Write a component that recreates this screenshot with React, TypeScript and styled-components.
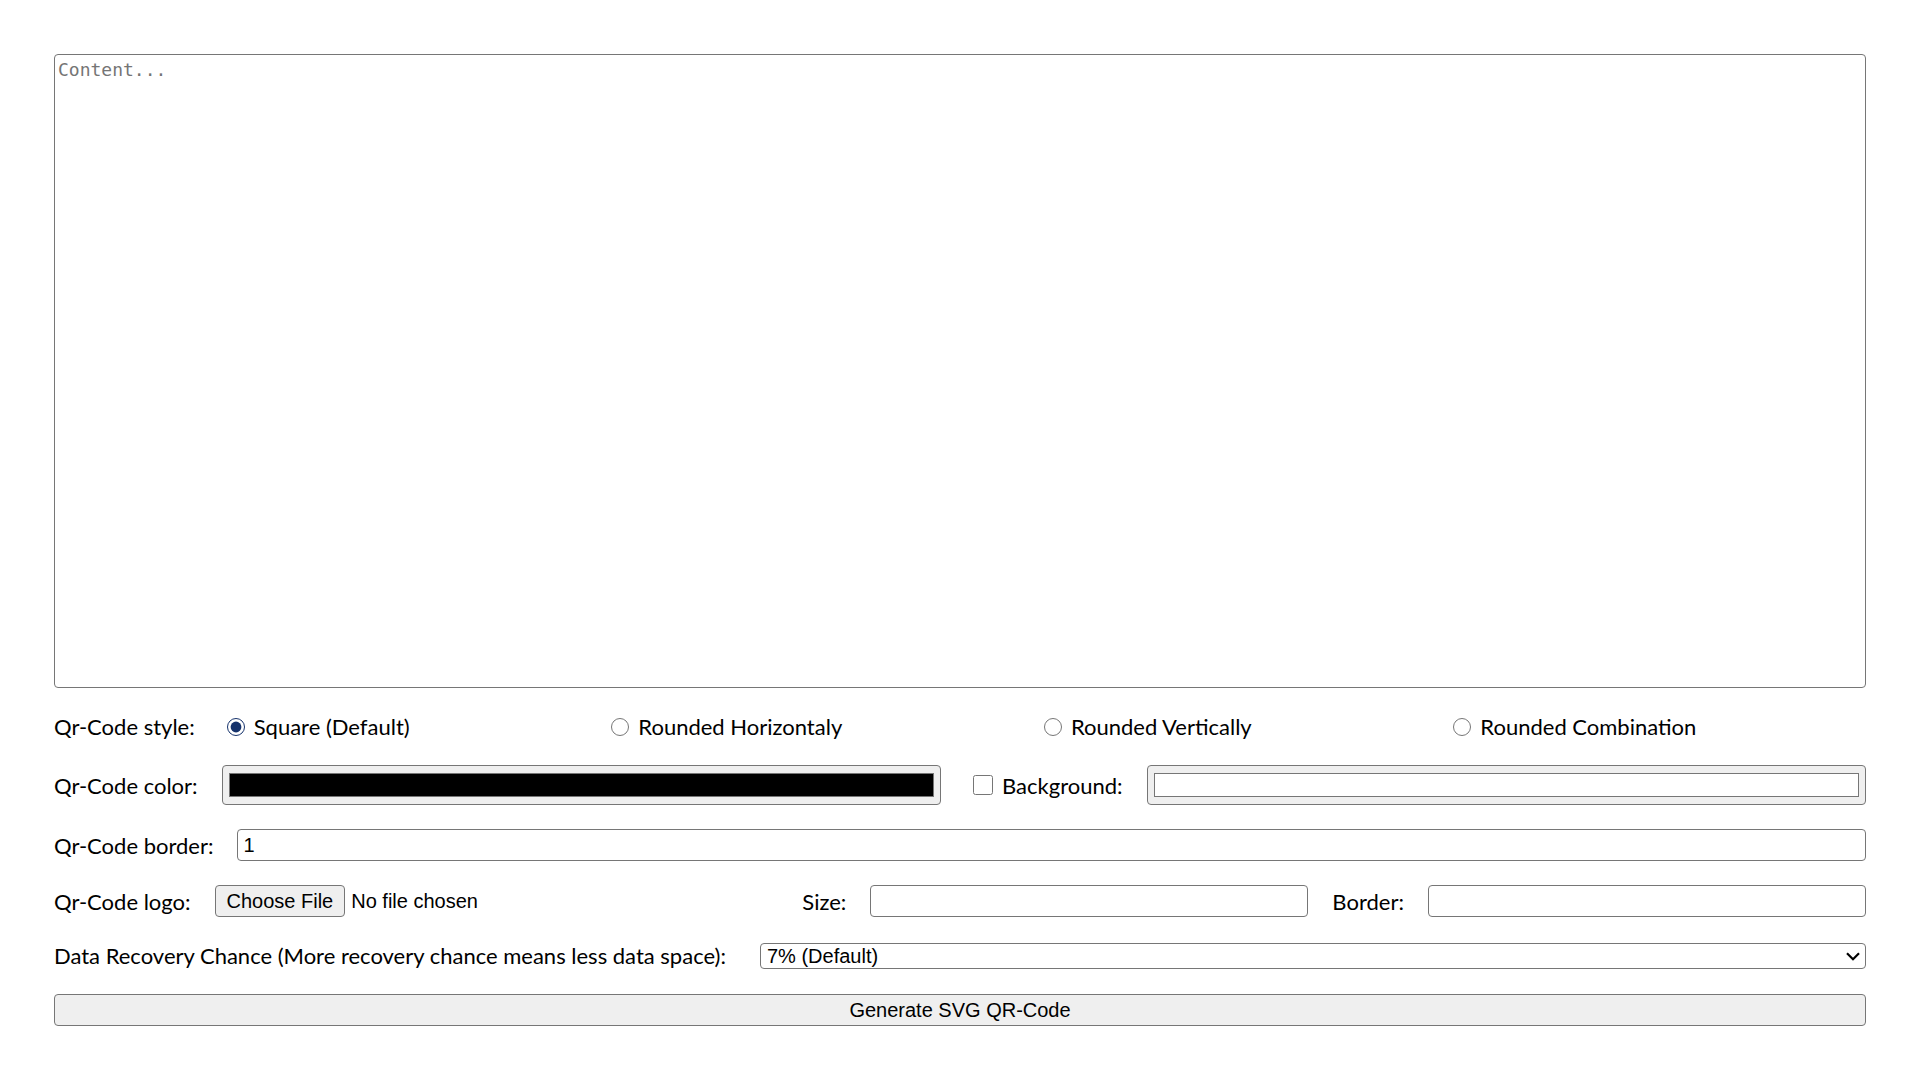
import { useState } from 'react';
import type { FormEvent } from 'react';
import { createGlobalStyle, styled } from 'styled-components';

interface IOption {
  value: string;
  label: string;
}

const GlobalStyle = createGlobalStyle`
  body {
    margin: 0;
    background: #fff;
    color: #000;
    font-family: Lato, sans-serif;
    font-size: 22px;
    line-height: 29px;
  }

  *, *::before, *::after {
    box-sizing: border-box;
  }
`;

const Form = styled.form`
  min-height: 100vh;
  padding: 54px;
  display: flex;
  flex-direction: column;
  gap: 24px;
`;

const Content = styled.textarea`
  flex: 1;
  width: 100%;
  margin: 0;
  padding: 3px;
  border: 1px solid #767676;
  border-radius: 4px;
  resize: none;
  font-family: 'DejaVu Sans Mono', monospace;
  font-size: 18px;
  line-height: 23px;

  &::placeholder {
    color: #757575;
  }
`;

const Row = styled.div`
  display: flex;
  align-items: center;
  gap: 24px;
`;

const Label = styled.label<{ $minWidth?: number }>`
  min-width: ${(props) => props.$minWidth ?? 0}px;
  white-space: nowrap;
`;

const RadioRow = styled(Row).attrs({
  role: 'radiogroup',
  'aria-labelledby': 'style-title',
})``;

const Choice = styled.label<{ $grow?: boolean }>`
  flex: ${(props) => (props.$grow ? '1 1 auto' : 'none')};
  padding-left: 8px;
  display: flex;
  align-items: center;
  gap: 9px;
  white-space: nowrap;
`;

const Radio = styled.input.attrs({ type: 'radio' })`
  width: 18px;
  height: 18px;
  margin: 0;
  accent-color: #15326b;
`;

const Checkbox = styled.input.attrs({ type: 'checkbox' })`
  width: 20px;
  height: 20px;
  margin: 0;
  accent-color: #15326b;
`;

const ColorInput = styled.input.attrs({ type: 'color' })`
  flex: 1;
  min-width: 0;
  height: 40px;
  padding: 0;
  border: 1px solid #767676;
  border-radius: 4px;
  background: #efefef;

  &::-webkit-color-swatch-wrapper {
    padding: 7px 6px;
  }

  &::-webkit-color-swatch {
    border: 1px solid #767676;
  }
`;

const TextInput = styled.input<{ $grow?: number }>`
  flex: ${(props) => props.$grow ?? 1} 1 0;
  min-width: 0;
  height: 32px;
  margin: 0;
  padding: 0 5px;
  border: 1px solid #767676;
  border-radius: 4px;
  background: #fff;
  font-family: 'Liberation Sans', sans-serif;
  font-size: 20px;
`;

const FileInput = styled.input.attrs({ type: 'file' })`
  flex: 9 1 16px;
  min-width: 0;
  height: 32px;
  font-family: 'Liberation Sans', sans-serif;
  font-size: 20px;
  line-height: 30px;

  &::file-selector-button {
    height: 32px;
    margin: 0 6px 0 0;
    padding: 0 11px;
    border: 1px solid #767676;
    border-radius: 4px;
    background: #efefef;
    color: #000;
    font: inherit;
  }
`;

const SelectWrapper = styled.div`
  position: relative;
  flex: 1;
  min-width: 0;
  display: flex;
`;

const Select = styled.select`
  width: 100%;
  height: 26px;
  margin: 0;
  padding: 0 24px 0 6px;
  appearance: none;
  border: 1px solid #767676;
  border-radius: 4px;
  background: #fff;
  color: #000;
  font-family: 'Liberation Sans', sans-serif;
  font-size: 20px;
`;

const Chevron = styled.svg`
  position: absolute;
  top: 9px;
  right: 6px;
  width: 14px;
  height: 9px;
  pointer-events: none;
`;

const SubmitButton = styled.button`
  width: 100%;
  height: 32px;
  padding: 0 6px;
  border: 1px solid #767676;
  border-radius: 4px;
  background: #efefef;
  color: #000;
  font-family: 'Liberation Sans', sans-serif;
  font-size: 20px;
`;

const styleOptions: IOption[] = [
  { value: 'square', label: 'Square (Default)' },
  { value: 'horizontal', label: 'Rounded Horizontaly' },
  { value: 'vertical', label: 'Rounded Vertically' },
  { value: 'combination', label: 'Rounded Combination' },
];

const recoveryOptions: IOption[] = [
  { value: 'L', label: '7% (Default)' },
  { value: 'M', label: '15%' },
  { value: 'Q', label: '25%' },
  { value: 'H', label: '30%' },
];

export default function App() {
  const [qrStyle, setQrStyle] = useState('square');

  function handleSubmit(event: FormEvent) {
    event.preventDefault();
  }

  return (
    <>
      <GlobalStyle />
      <Form onSubmit={handleSubmit}>
        <Content name="content" aria-label="Content" placeholder="Content..." />
        <RadioRow>
          <span id="style-title">Qr-Code style:</span>
          {styleOptions.map((option) => (
            <Choice key={option.value} $grow>
              <Radio
                name="style"
                value={option.value}
                checked={qrStyle === option.value}
                onChange={() => setQrStyle(option.value)}
              />
              {option.label}
            </Choice>
          ))}
        </RadioRow>
        <Row>
          <Label htmlFor="color">Qr-Code color:</Label>
          <ColorInput id="color" name="color" defaultValue="#000000" />
          <Choice>
            <Checkbox name="useBackground" />
            Background:
          </Choice>
          <ColorInput name="background" aria-label="Background color" defaultValue="#ffffff" />
        </Row>
        <Row>
          <Label htmlFor="border">Qr-Code border:</Label>
          <TextInput id="border" name="border" type="number" defaultValue={1} />
        </Row>
        <Row>
          <Label htmlFor="logo">Qr-Code logo:</Label>
          <FileInput id="logo" name="logo" accept="image/*" />
          <Label htmlFor="logo-size">Size:</Label>
          <TextInput id="logo-size" name="logoSize" type="number" $grow={7} />
          <Label htmlFor="logo-border">Border:</Label>
          <TextInput id="logo-border" name="logoBorder" type="number" $grow={7} />
        </Row>
        <Row>
          <Label htmlFor="recovery" $minWidth={682}>
            Data Recovery Chance (More recovery chance means less data space):
          </Label>
          <SelectWrapper>
            <Select id="recovery" name="recovery">
              {recoveryOptions.map((option) => (
                <option key={option.value} value={option.value}>
                  {option.label}
                </option>
              ))}
            </Select>
            <Chevron viewBox="0 0 14 9" aria-hidden="true">
              <path d="M1 1.2 7 7.2 13 1.2" fill="none" stroke="#000" strokeWidth="2.2" />
            </Chevron>
          </SelectWrapper>
        </Row>
        <SubmitButton type="submit">Generate SVG QR-Code</SubmitButton>
      </Form>
    </>
  );
}
